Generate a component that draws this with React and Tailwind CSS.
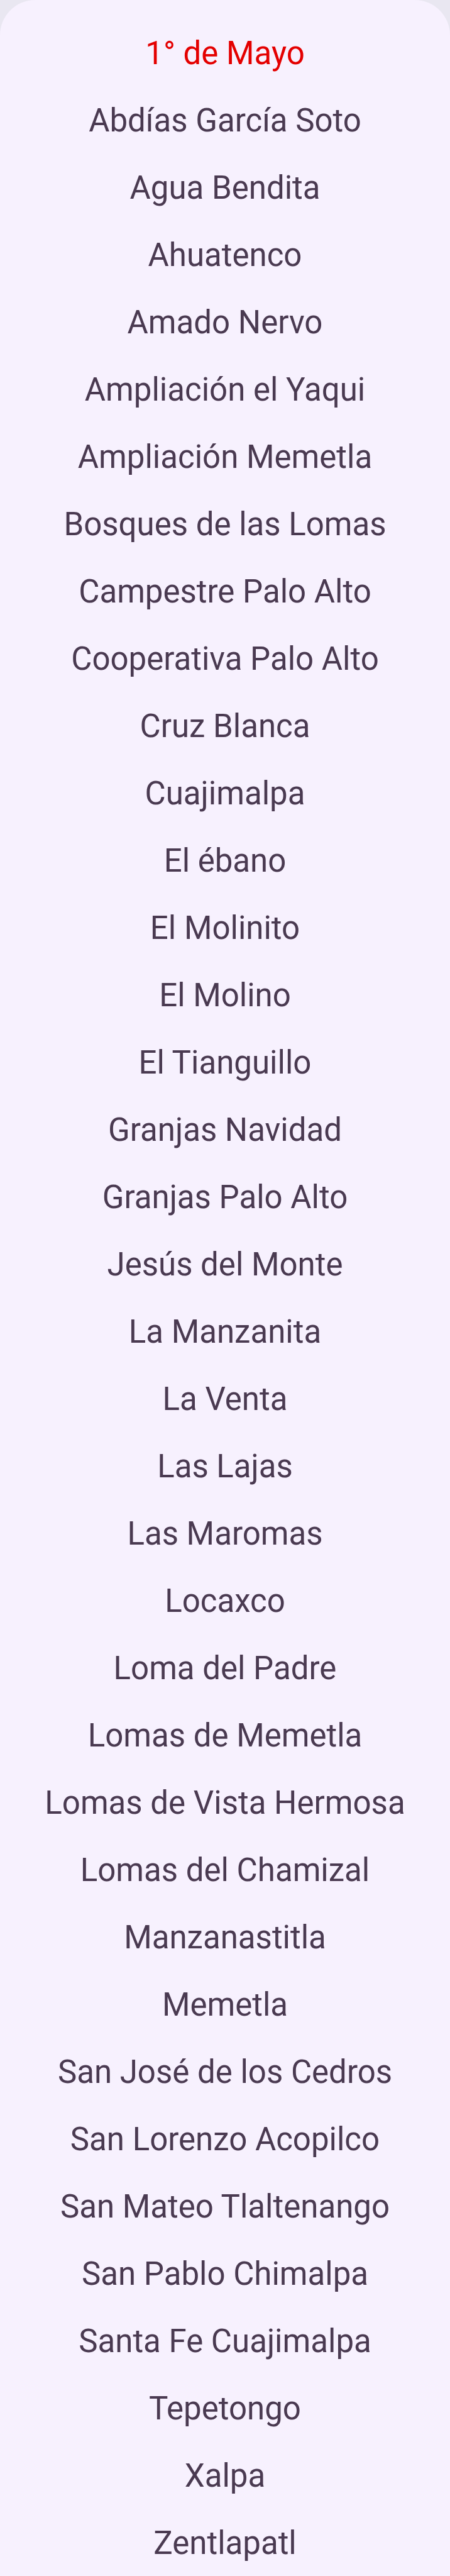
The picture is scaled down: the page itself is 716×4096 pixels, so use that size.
import React from 'react';

const COLONIAS = [
  '1° de Mayo',
  'Abdías García Soto',
  'Agua Bendita',
  'Ahuatenco',
  'Amado Nervo',
  'Ampliación el Yaqui',
  'Ampliación Memetla',
  'Bosques de las Lomas',
  'Campestre Palo Alto',
  'Cooperativa Palo Alto',
  'Cruz Blanca',
  'Cuajimalpa',
  'El ébano',
  'El Molinito',
  'El Molino',
  'El Tianguillo',
  'Granjas Navidad',
  'Granjas Palo Alto',
  'Jesús del Monte',
  'La Manzanita',
  'La Venta',
  'Las Lajas',
  'Las Maromas',
  'Locaxco',
  'Loma del Padre',
  'Lomas de Memetla',
  'Lomas de Vista Hermosa',
  'Lomas del Chamizal',
  'Manzanastitla',
  'Memetla',
  'San José de los Cedros',
  'San Lorenzo Acopilco',
  'San Mateo Tlaltenango',
  'San Pablo Chimalpa',
  'Santa Fe Cuajimalpa',
  'Tepetongo',
  'Xalpa',
  'Zentlapatl',
];

const App = () => {
  const selected = '1° de Mayo';

  return (
    <div className="min-h-screen bg-[#e9e7f1]" style={{ fontFamily: 'Roboto, "Noto Sans", sans-serif' }}>
      {/* Picker sheet */}
      <div className="bg-[#f7f1fe] rounded-t-[56px] pt-[31px] pb-8 flex flex-col">
        {COLONIAS.map((name) => (
          <div
            key={name}
            className={`h-[107px] flex items-center justify-center text-[51px] leading-[1.172] whitespace-nowrap ${
              name === selected ? 'text-[#e40000]' : 'text-[#4a3a51]'
            }`}
          >
            {name}
          </div>
        ))}
      </div>
    </div>
  );
};

export default App;
